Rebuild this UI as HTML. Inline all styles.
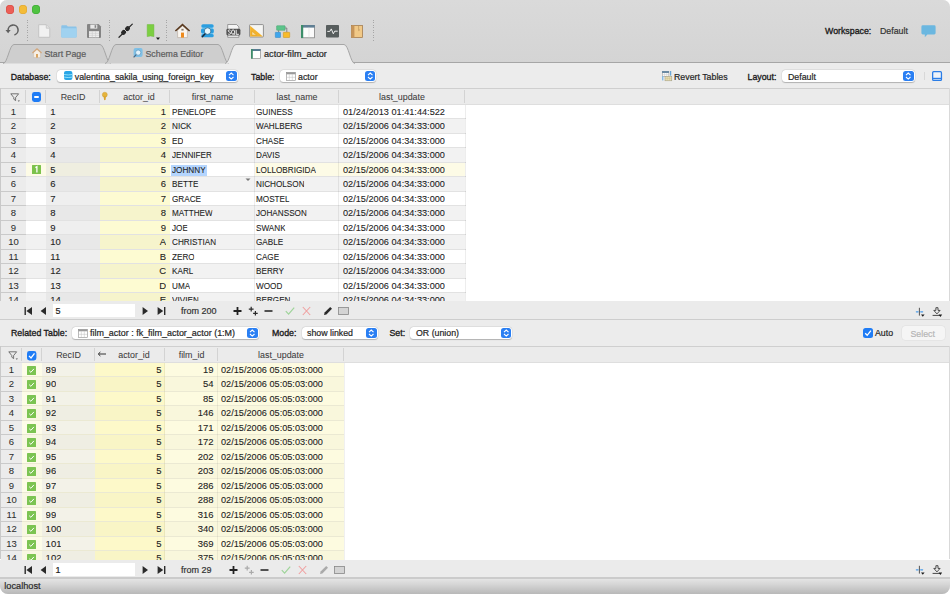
<!DOCTYPE html><html><head><meta charset="utf-8"><style>
*{box-sizing:border-box;margin:0;padding:0}
html,body{width:950px;height:594px;overflow:hidden;background:#fff;font-family:"Liberation Sans", sans-serif;color:#262626}
.t{-webkit-text-stroke:0.2px currentColor}
.t.b{-webkit-text-stroke:0.32px currentColor;color:#1a1a1a}
.cell{-webkit-text-stroke:0.1px currentColor}
.hdr{-webkit-text-stroke:0.05px currentColor}
.cell.rn{-webkit-text-stroke:0.05px currentColor;color:#2e2e2e}
#win{position:absolute;left:0;top:0;width:950px;height:594px;border-radius:7px 7px 8px 8px;overflow:hidden;background:#ececec}
.a{position:absolute}
.t{position:absolute;white-space:nowrap;line-height:12px;height:12px}
svg{position:absolute;overflow:visible}
.light{position:absolute;width:8.5px;height:8.5px;border-radius:50%}
.sep{position:absolute;top:20px;height:21px;width:1px;background:repeating-linear-gradient(#a6a6a6 0 1px,transparent 1px 2.5px)}
.pop{position:absolute;height:12px;background:#fff;border-radius:3.5px;box-shadow:0 0 0 0.4px rgba(0,0,0,.07),0 0.6px 1px rgba(0,0,0,.22)}
.stp{position:absolute;top:1px;width:10.5px;height:10px;border-radius:2.5px;background:#2a7ff3}
.lbl{font-size:8.8px;color:#262626}
.cell{position:absolute;font-size:9.5px;line-height:13.7px;height:14.5px;white-space:nowrap;overflow:hidden;color:#1e1e1e}
.hdr{position:absolute;font-size:8.9px;line-height:17px;height:16px;white-space:nowrap;text-align:center;color:#3c3c3c}
</style></head><body><div id="win">
<div class="a" style="left:0;top:0;width:950px;height:63px;background:linear-gradient(#dadada,#d4d4d4)"></div>
<div class="light" style="left:5.5px;top:5.4px;background:#ec5f57;box-shadow:inset 0 0 0 .5px #d5483f"></div>
<div class="light" style="left:18.5px;top:5.4px;background:#f4bc38;box-shadow:inset 0 0 0 .5px #dca332"></div>
<div class="light" style="left:31.7px;top:5.4px;background:#4fc340;box-shadow:inset 0 0 0 .5px #3aa632"></div>
<div class="sep" style="left:27px"></div>
<div class="sep" style="left:109px"></div>
<div class="sep" style="left:166px"></div>
<div class="sep" style="left:373px"></div>
<svg style="left:5px;top:23.4px" width="16" height="15" viewBox="0 0 16 15"><path d="M3.1 7.4 A5 5 0 1 1 9.4 11.9" fill="none" stroke="#606060" stroke-width="1.6"/><path d="M0.5 6.9 H5.7 L3.1 10.3 Z" fill="#606060"/></svg>
<svg style="left:38px;top:24px" width="13" height="14" viewBox="0 0 13 14"><path d="M0.7 0.7 H8.3 L11.8 4.2 V13.3 H0.7 Z" fill="#f1f1f1" stroke="#c4c4c4" stroke-width="1"/><path d="M8.3 0.7 V4.2 H11.8" fill="#e2e2e2" stroke="#c4c4c4" stroke-width="0.8"/></svg>
<svg style="left:61px;top:25px" width="16" height="13" viewBox="0 0 16 13"><path d="M0.3 1.2 Q0.3 0.3 1.2 0.3 H5.6 L6.8 1.6 H14.8 Q15.6 1.6 15.6 2.4 V11.8 Q15.6 12.6 14.8 12.6 H1.1 Q0.3 12.6 0.3 11.8 Z" fill="#8ac3e8"/><path d="M0.3 3.2 H15.6 V11.8 Q15.6 12.6 14.8 12.6 H1.1 Q0.3 12.6 0.3 11.8 Z" fill="#a0d2f0"/></svg>
<svg style="left:87px;top:24px" width="14" height="14" viewBox="0 0 14 14"><path d="M0 1 Q0 0 1 0 H11.5 L14 2.5 V13 Q14 14 13 14 H1 Q0 14 0 13 Z" fill="#848484"/><rect x="3.3" y="0.6" width="7" height="4" fill="#e9e9e9"/><rect x="7.6" y="1.2" width="1.6" height="2.6" fill="#848484"/><rect x="2" y="7.2" width="10" height="6.2" fill="#efefef"/><path d="M2 9.3 H12 M2 11.3 H12 M5.3 7.2 V13.4 M8.6 7.2 V13.4" stroke="#c9c9c9" stroke-width="0.6"/></svg>
<svg style="left:118px;top:23px" width="16" height="16" viewBox="0 0 16 16"><path d="M1 14.2 L14.3 1.1" stroke="#2a2a2a" stroke-width="1.3" stroke-linecap="round"/><ellipse cx="5.6" cy="9.3" rx="2.7" ry="2.3" transform="rotate(-45 5.6 9.3)" fill="#2a2a2a"/><ellipse cx="9.5" cy="5.6" rx="2.7" ry="2.3" transform="rotate(-45 9.5 5.6)" fill="#2a2a2a"/><path d="M5.2 5.2 L10 10" stroke="#d6d6d6" stroke-width="0.9"/></svg>
<svg style="left:146px;top:23.5px" width="15" height="17" viewBox="0 0 15 17"><path d="M1.2 0.6 H7.9 V12.6 L4.55 12 L1.2 12.6 Z" fill="#7ccf42" stroke="#6cb93a" stroke-width="0.5"/><path d="M10 13.6 H14 L12 16 Z" fill="#1c1c1c"/></svg>
<svg style="left:175px;top:23.5px" width="15" height="14" viewBox="0 0 15 14"><path d="M2.6 6.2 V13.6 H12.4 V6.2 L7.5 2 Z" fill="#faf6f0" stroke="#b5a89a" stroke-width="0.6"/><path d="M0.4 7 L7.5 0.6 L14.6 7" fill="none" stroke="#5a3a20" stroke-width="1.6"/><rect x="6" y="8.6" width="3" height="5" fill="#ee8a1c"/><rect x="6.4" y="4.8" width="2.2" height="1.8" fill="#8a7a6a"/></svg>
<svg style="left:201px;top:23.8px" width="14" height="14" viewBox="0 0 14 14"><rect x="0.5" y="1" width="12" height="11.6" rx="1.5" fill="#9fdaf5"/><rect x="0.3" y="0.2" width="12.4" height="3.5" rx="1.7" fill="#2b9ee0"/><rect x="0" y="4.4" width="12.8" height="5.1" rx="1.7" fill="#2b9ee0"/><rect x="0.3" y="10.1" width="12.4" height="3.1" rx="1.5" fill="#2b9ee0"/><circle cx="6.6" cy="7.1" r="3.3" fill="#e6f7fd" stroke="#1d5c84" stroke-width="0.7"/><path d="M3.9 10 L1.3 12.7" stroke="#182838" stroke-width="1.5" stroke-linecap="round"/></svg>
<svg style="left:225.5px;top:23.8px" width="15" height="14" viewBox="0 0 15 14"><path d="M1.7 0.5 H10.5 L12.9 2.9 V13.3 H1.7 Z" fill="#f4f4f4" stroke="#7a7a7a" stroke-width="0.7"/><rect x="0.4" y="4.8" width="14" height="6.6" rx="1.4" fill="#4f4f4f"/><path d="M4.5 6.4 Q4.1 5.9 3.3 5.9 Q2.2 5.9 2.2 6.9 Q2.2 7.7 3.3 8 Q4.6 8.4 4.6 9.3 Q4.6 10.3 3.3 10.3 Q2.4 10.3 1.9 9.7 M7.1 5.9 Q5.5 5.9 5.5 8.1 Q5.5 10.3 7.1 10.3 Q8.7 10.3 8.7 8.1 Q8.7 5.9 7.1 5.9 M7.6 9.2 L8.9 10.8 M10.2 5.8 V10.3 H12.9" fill="none" stroke="#f0f0f0" stroke-width="1"/></svg>
<svg style="left:249px;top:24.3px" width="15" height="14" viewBox="0 0 15 14"><rect x="0.6" y="0.6" width="13.8" height="12.4" rx="0.6" fill="#f5f5f3" stroke="#909090" stroke-width="1"/><path d="M1.1 1.8 L13.9 12.5 H1.1 Z" fill="#f3b22c"/><path d="M3 7.4 L7.4 11 H3 Z" fill="#fbe2a6" stroke="#d79a1e" stroke-width="0.4"/></svg>
<svg style="left:275px;top:24.5px" width="16" height="14" viewBox="0 0 16 14"><rect x="1.6" y="0.7" width="8.5" height="4.6" rx="0.5" fill="#5cc48a" stroke="#47a271" stroke-width="0.5"/><path d="M10.1 3 H11.8 V7.3 M3.6 5.3 V7.3" stroke="#707070" stroke-width="0.8" fill="none"/><rect x="0.3" y="7.3" width="5.2" height="5.2" rx="0.5" fill="#3fa6ec" stroke="#2f86c2" stroke-width="0.5"/><rect x="8.3" y="7.3" width="6.4" height="5.2" rx="0.5" fill="#f8bb2a" stroke="#c98f14" stroke-width="0.5"/></svg>
<svg style="left:301px;top:24.5px" width="14" height="13" viewBox="0 0 14 13"><rect x="0.4" y="0.4" width="13" height="12.4" fill="#fbfbfb" stroke="#858585" stroke-width="0.8"/><rect x="0" y="0" width="13.8" height="2.6" fill="#5f7f94"/><rect x="0" y="0" width="2.2" height="13" fill="#3c8d69"/><path d="M8 2.6 V12.6" stroke="#dcdcdc" stroke-width="0.6"/></svg>
<svg style="left:326px;top:24.8px" width="13" height="13" viewBox="0 0 13 13"><rect x="0" y="0" width="13" height="12.4" rx="0.8" fill="#575d5d"/><path d="M1.3 6.4 H3.8 L5.3 3.9 L7.3 8.8 L8.7 6.2 H11.7" fill="none" stroke="#f0f0f0" stroke-width="1"/></svg>
<svg style="left:351px;top:24.8px" width="12" height="13" viewBox="0 0 12 13"><rect x="0.4" y="0.4" width="11.2" height="12.2" fill="#f1c987" stroke="#9b7347" stroke-width="0.7"/><rect x="0.4" y="0.4" width="3" height="12.2" fill="#c7955a"/><path d="M7.6 0.8 V5.6 L9 4.6" stroke="#b48a52" stroke-width="0.6" fill="none"/></svg>
<div class="t lbl b" style="left:825px;top:25px;font-size:8.8px">Workspace:</div>
<div class="t lbl" style="left:880px;top:25px;font-size:8.8px;color:#333">Default</div>
<svg style="left:921px;top:25px" width="15" height="13" viewBox="0 0 15 13"><path d="M1.8 0.3 H13.2 Q14.6 0.3 14.6 1.7 V8 Q14.6 9.4 13.2 9.4 H6.4 L3.8 12.2 V9.4 H1.8 Q0.4 9.4 0.4 8 V1.7 Q0.4 0.3 1.8 0.3 Z" fill="#6bb7e0"/></svg>
<div class="a" style="left:0;top:62.2px;width:950px;height:1.3px;background:#a6a6a6"></div>
<svg style="left:3px;top:44px" width="108" height="20" viewBox="0 0 108 20"><path d="M0 19.5 C4.6 19.5 6.4 0.5 11 0.5 L97 0.5 C101.6 0.5 103.4 19.5 108 19.5 Z" fill="#cecece"/><path d="M0 19.5 C4.6 19.5 6.4 0.5 11 0.5 L97 0.5 C101.6 0.5 103.4 19.5 108 19.5" fill="none" stroke="#a2a2a2" stroke-width="0.95"/></svg>
<svg style="left:105px;top:44px" width="124" height="20" viewBox="0 0 124 20"><path d="M0 19.5 C4.6 19.5 6.4 0.5 11 0.5 L113 0.5 C117.6 0.5 119.4 19.5 124 19.5 Z" fill="#cecece"/><path d="M0 19.5 C4.6 19.5 6.4 0.5 11 0.5 L113 0.5 C117.6 0.5 119.4 19.5 124 19.5" fill="none" stroke="#a2a2a2" stroke-width="0.95"/></svg>
<svg style="left:225px;top:44px" width="130" height="20" viewBox="0 0 130 20"><path d="M0 19.5 C4.6 19.5 6.4 0.5 11 0.5 L119 0.5 C123.6 0.5 125.4 19.5 130 19.5 Z" fill="#ececec"/><path d="M0 19.5 C4.6 19.5 6.4 0.5 11 0.5 L119 0.5 C123.6 0.5 125.4 19.5 130 19.5" fill="none" stroke="#a2a2a2" stroke-width="0.95"/></svg>
<div class="a" style="left:229px;top:62.2px;width:122px;height:2px;background:#ececec"></div>
<svg style="left:32px;top:48px" width="10" height="10" viewBox="0 0 10 10"><path d="M1.6 4.4 V9.6 H8.4 V4.4 L5 1.4 Z" fill="#f7f0e6" stroke="#c9b9a8" stroke-width="0.5"/><path d="M0.4 5 L5 0.8 L9.6 5" fill="none" stroke="#d4a77a" stroke-width="1.1"/><rect x="4" y="6" width="2" height="3.6" fill="#d9a461"/></svg>
<div class="t" style="left:44.5px;top:47.8px;font-size:8.8px;color:#5c5c5c">Start Page</div>
<svg style="left:133px;top:48px" width="10" height="10" viewBox="0 0 10 10"><rect x="0.6" y="0" width="9" height="9" rx="2" fill="#7fc0e6"/><circle cx="5.2" cy="4.6" r="2.6" fill="#e4f2fa" stroke="#4f8fb8" stroke-width="0.6"/><path d="M3.2 6.6 L0.6 9.4" stroke="#4a6580" stroke-width="1.2"/></svg>
<div class="t" style="left:145.5px;top:47.8px;font-size:8.8px;color:#5c5c5c">Schema Editor</div>
<svg style="left:251px;top:48.5px" width="10" height="10" viewBox="0 0 10 10"><rect x="0.3" y="0.3" width="9" height="9" fill="#fff" stroke="#7d7d7d" stroke-width="0.6"/><rect x="0" y="0" width="9.6" height="2" fill="#577b91"/><rect x="0" y="0" width="1.8" height="9.6" fill="#3e8b6a"/></svg>
<div class="t" style="left:264px;top:47.6px;font-size:9.15px;color:#262626">actor-film_actor</div>
<div class="a" style="left:0;top:63.5px;width:950px;height:24.5px;background:#ececec"></div>
<div class="t lbl b" style="left:10.7px;top:71px">Database:</div>
<div class="pop" style="left:56.5px;top:69.5px;width:181px"><div class="stp" style="left:169.5px"><svg style="left:0;top:0" width="10.5" height="10" viewBox="0 0 10.5 10"><path d="M3 4.2 L5.25 2.1 L7.5 4.2 M3 6 L5.25 8.1 L7.5 6" fill="none" stroke="#fff" stroke-width="1.1"/></svg></div></div>
<svg style="left:63.7px;top:71.4px" width="9" height="9.5" viewBox="0 0 9 9.5"><rect x="0" y="0" width="8.4" height="9" rx="2" fill="#29a5e6"/><path d="M0 3.5 Q4.2 4.4 8.4 3.5 M0 6.1 Q4.2 7 8.4 6.1" stroke="#8fe0fb" stroke-width="1" fill="none"/></svg>
<div class="t lbl" style="left:74.8px;top:71px">valentina_sakila_using_foreign_key</div>
<div class="t lbl b" style="left:251px;top:71px">Table:</div>
<div class="pop" style="left:280px;top:69.5px;width:96px"><div class="stp" style="left:84.5px"><svg style="left:0;top:0" width="10.5" height="10" viewBox="0 0 10.5 10"><path d="M3 4.2 L5.25 2.1 L7.5 4.2 M3 6 L5.25 8.1 L7.5 6" fill="none" stroke="#fff" stroke-width="1.1"/></svg></div></div>
<svg style="left:286px;top:71.5px" width="10" height="9" viewBox="0 0 10 9"><rect x="0.3" y="0.3" width="9" height="8.2" fill="#fff" stroke="#8a8a8a" stroke-width="0.6"/><rect x="0.3" y="0.3" width="9" height="2" fill="#9a9a9a"/><path d="M3.3 2.3 V8.5 M6.3 2.3 V8.5 M0.3 5.3 H9.3" stroke="#bdbdbd" stroke-width="0.5"/></svg>
<div class="t lbl" style="left:298px;top:71px">actor</div>
<svg style="left:662.2px;top:71.4px" width="10" height="10" viewBox="0 0 10 10"><rect x="0.3" y="0.3" width="6.6" height="5.4" fill="#fafafa" stroke="#8c8c8c" stroke-width="0.5"/><rect x="0" y="0" width="7" height="2" fill="#6c8aa2"/><path d="M0.3 3.6 H6.9 M2.5 2 V5.7 M4.7 2 V5.7" stroke="#c4c4c4" stroke-width="0.4"/><rect x="8.1" y="0" width="1.1" height="4.6" fill="#5c9fd6"/><rect x="0.2" y="5.2" width="1.1" height="4.2" fill="#6db0e4"/><rect x="3" y="5.4" width="6.8" height="4.4" fill="#e9deb0" stroke="#9c9880" stroke-width="0.5"/><path d="M3 7.5 H9.8 M5.3 5.4 V9.8 M7.5 5.4 V9.8" stroke="#c9bd8e" stroke-width="0.4"/></svg>
<div class="t lbl" style="left:674px;top:71px">Revert Tables</div>
<div class="t lbl b" style="left:747.5px;top:71px">Layout:</div>
<div class="pop" style="left:782px;top:69.5px;width:133px"><div class="stp" style="left:121px"><svg style="left:0;top:0" width="10.5" height="10" viewBox="0 0 10.5 10"><path d="M3 4.2 L5.25 2.1 L7.5 4.2 M3 6 L5.25 8.1 L7.5 6" fill="none" stroke="#fff" stroke-width="1.1"/></svg></div></div>
<div class="t lbl" style="left:788px;top:71px">Default</div>
<div class="a" style="left:924px;top:72px;width:1px;height:8px;background:#d8d8d8"></div>
<svg style="left:931.8px;top:71px" width="11" height="11" viewBox="0 0 11 11"><rect x="0.65" y="0.65" width="8.8" height="8.8" rx="1" fill="#eef3f9" stroke="#2b7de6" stroke-width="1.3"/><rect x="0.65" y="6.8" width="8.8" height="1.3" fill="#2b7de6"/></svg>
<div class="a" style="left:0;top:88px;width:950px;height:213.5px;background:#fff"></div>
<div class="a" style="left:0;top:88px;width:950px;height:1px;background:#cfcfcf"></div>
<div class="a" style="left:0;top:89px;width:950px;height:15.6px;background:#ebebeb;border-bottom:1px solid #dedede"></div>
<div class="a" style="left:25px;top:90px;width:1px;height:13px;background:#d3d3d3"></div>
<div class="a" style="left:45px;top:90px;width:1px;height:13px;background:#d3d3d3"></div>
<div class="a" style="left:99px;top:90px;width:1px;height:13px;background:#d3d3d3"></div>
<div class="a" style="left:169px;top:90px;width:1px;height:13px;background:#d3d3d3"></div>
<div class="a" style="left:254px;top:90px;width:1px;height:13px;background:#d3d3d3"></div>
<div class="a" style="left:338px;top:90px;width:1px;height:13px;background:#d3d3d3"></div>
<div class="a" style="left:464px;top:90px;width:1px;height:13px;background:#d3d3d3"></div>
<div class="a" style="left:0;top:88px;width:1px;height:213px;background:#c9c9c9"></div>
<div class="a" style="left:948.5px;top:88px;width:1.5px;height:213px;background:#d9d9d9"></div>
<div class="hdr" style="left:46px;top:89px;width:54px">RecID</div>
<div class="hdr" style="left:108px;top:89px;width:62px">actor_id</div>
<div class="hdr" style="left:170px;top:89px;width:85px">first_name</div>
<div class="hdr" style="left:255px;top:89px;width:84px">last_name</div>
<div class="hdr" style="left:339px;top:89px;width:126px">last_update</div>
<svg style="left:9.5px;top:93px" width="11" height="10" viewBox="0 0 11 10"><path d="M0.8 0.8 H8.6 L5.6 4.6 V7.6 L3.8 6.2 V4.6 Z" fill="none" stroke="#555" stroke-width="0.8" stroke-linejoin="round"/><path d="M7.6 7.4 H10 L8.8 8.8 Z" fill="#555"/></svg>
<div class="a" style="left:32px;top:92.4px;width:9.2px;height:9.2px;border-radius:2.4px;background:#1f7cf5"><div class="a" style="left:1.9px;top:3.8px;width:5.4px;height:1.6px;background:#fff;border-radius:1px"></div></div>
<svg style="left:101.8px;top:91.8px" width="6" height="9" viewBox="0 0 6 9"><circle cx="2.8" cy="2.7" r="2.5" fill="#e5b43c" stroke="#c9962a" stroke-width="0.4"/><path d="M1.7 4.6 H3.9 L3.6 7.8 Q2.8 8.6 2 7.8 Z" fill="#d9a431"/></svg>
<div class="a" style="left:0;top:104.6px;width:950px;height:196.70000000000002px;overflow:hidden">
<div class="a" style="left:1px;top:0.0px;width:24.5px;height:14.5px;background:#ececec;border-bottom:1px solid #cacaca"></div>
<div class="a" style="left:25.5px;top:0.0px;width:20.5px;height:14.5px;background:#ffffff"></div>
<div class="a" style="left:46px;top:0.0px;width:54px;height:14.5px;background:#efefef"></div>
<div class="a" style="left:100px;top:0.0px;width:70px;height:14.5px;background:#fdfbd2"></div>
<div class="a" style="left:170px;top:0.0px;width:295px;height:14.5px;background:#ffffff"></div>
<div class="a" style="left:25.5px;top:13.9px;width:440px;height:0.6px;background:#e2e2e2"></div>
<div class="cell rn" style="left:1px;top:0.0px;width:25px;text-align:center">1</div>
<div class="cell" style="left:50.3px;top:0.0px">1</div>
<div class="cell" style="left:100px;top:0.0px;width:66px;text-align:right">1</div>
<div class="cell" style="left:171.9px;top:0.0px;transform:scaleX(.86);transform-origin:0 0">PENELOPE</div>
<div class="cell" style="left:256.4px;top:0.0px;transform:scaleX(.86);transform-origin:0 0">GUINESS</div>
<div class="cell" style="left:342.5px;top:0.0px;transform:scaleX(.965);transform-origin:0 0">01/24/2013 01:41:44:522</div>
<div class="a" style="left:1px;top:14.5px;width:24.5px;height:14.5px;background:#ececec;border-bottom:1px solid #cacaca"></div>
<div class="a" style="left:25.5px;top:14.5px;width:20.5px;height:14.5px;background:#f1f1f1"></div>
<div class="a" style="left:46px;top:14.5px;width:54px;height:14.5px;background:#e8e8e8"></div>
<div class="a" style="left:100px;top:14.5px;width:70px;height:14.5px;background:#f6f4cc"></div>
<div class="a" style="left:170px;top:14.5px;width:295px;height:14.5px;background:#f2f2f2"></div>
<div class="a" style="left:25.5px;top:28.4px;width:440px;height:0.6px;background:#e2e2e2"></div>
<div class="cell rn" style="left:1px;top:14.5px;width:25px;text-align:center">2</div>
<div class="cell" style="left:50.3px;top:14.5px">2</div>
<div class="cell" style="left:100px;top:14.5px;width:66px;text-align:right">2</div>
<div class="cell" style="left:171.9px;top:14.5px;transform:scaleX(.86);transform-origin:0 0">NICK</div>
<div class="cell" style="left:256.4px;top:14.5px;transform:scaleX(.86);transform-origin:0 0">WAHLBERG</div>
<div class="cell" style="left:342.5px;top:14.5px;transform:scaleX(.965);transform-origin:0 0">02/15/2006 04:34:33:000</div>
<div class="a" style="left:1px;top:29.0px;width:24.5px;height:14.5px;background:#ececec;border-bottom:1px solid #cacaca"></div>
<div class="a" style="left:25.5px;top:29.0px;width:20.5px;height:14.5px;background:#ffffff"></div>
<div class="a" style="left:46px;top:29.0px;width:54px;height:14.5px;background:#efefef"></div>
<div class="a" style="left:100px;top:29.0px;width:70px;height:14.5px;background:#fdfbd2"></div>
<div class="a" style="left:170px;top:29.0px;width:295px;height:14.5px;background:#ffffff"></div>
<div class="a" style="left:25.5px;top:42.9px;width:440px;height:0.6px;background:#e2e2e2"></div>
<div class="cell rn" style="left:1px;top:29.0px;width:25px;text-align:center">3</div>
<div class="cell" style="left:50.3px;top:29.0px">3</div>
<div class="cell" style="left:100px;top:29.0px;width:66px;text-align:right">3</div>
<div class="cell" style="left:171.9px;top:29.0px;transform:scaleX(.86);transform-origin:0 0">ED</div>
<div class="cell" style="left:256.4px;top:29.0px;transform:scaleX(.86);transform-origin:0 0">CHASE</div>
<div class="cell" style="left:342.5px;top:29.0px;transform:scaleX(.965);transform-origin:0 0">02/15/2006 04:34:33:000</div>
<div class="a" style="left:1px;top:43.5px;width:24.5px;height:14.5px;background:#ececec;border-bottom:1px solid #cacaca"></div>
<div class="a" style="left:25.5px;top:43.5px;width:20.5px;height:14.5px;background:#f1f1f1"></div>
<div class="a" style="left:46px;top:43.5px;width:54px;height:14.5px;background:#e8e8e8"></div>
<div class="a" style="left:100px;top:43.5px;width:70px;height:14.5px;background:#f6f4cc"></div>
<div class="a" style="left:170px;top:43.5px;width:295px;height:14.5px;background:#f2f2f2"></div>
<div class="a" style="left:25.5px;top:57.4px;width:440px;height:0.6px;background:#e2e2e2"></div>
<div class="cell rn" style="left:1px;top:43.5px;width:25px;text-align:center">4</div>
<div class="cell" style="left:50.3px;top:43.5px">4</div>
<div class="cell" style="left:100px;top:43.5px;width:66px;text-align:right">4</div>
<div class="cell" style="left:171.9px;top:43.5px;transform:scaleX(.86);transform-origin:0 0">JENNIFER</div>
<div class="cell" style="left:256.4px;top:43.5px;transform:scaleX(.86);transform-origin:0 0">DAVIS</div>
<div class="cell" style="left:342.5px;top:43.5px;transform:scaleX(.965);transform-origin:0 0">02/15/2006 04:34:33:000</div>
<div class="a" style="left:1px;top:58.0px;width:24.5px;height:14.5px;background:#ececec;border-bottom:1px solid #cacaca"></div>
<div class="a" style="left:25.5px;top:58.0px;width:20.5px;height:14.5px;background:#fdfbe6"></div>
<div class="a" style="left:46px;top:58.0px;width:54px;height:14.5px;background:#efeee0"></div>
<div class="a" style="left:100px;top:58.0px;width:70px;height:14.5px;background:#fcfad8"></div>
<div class="a" style="left:170px;top:58.0px;width:295px;height:14.5px;background:#fdfbe6"></div>
<div class="a" style="left:170px;top:58.0px;width:85px;height:14.5px;background:#fff"></div>
<div class="a" style="left:25.5px;top:71.9px;width:440px;height:0.6px;background:#e2e2e2"></div>
<div class="cell rn" style="left:1px;top:58.0px;width:25px;text-align:center">5</div>
<div class="cell" style="left:50.3px;top:58.0px">5</div>
<div class="cell" style="left:100px;top:58.0px;width:66px;text-align:right">5</div>
<div class="a" style="left:171px;top:60.0px;width:36px;height:11px;background:#b4d5fe"></div>
<div class="cell" style="left:171.9px;top:58.0px;transform:scaleX(.86);transform-origin:0 0">JOHNNY</div>
<div class="cell" style="left:256.4px;top:58.0px;transform:scaleX(.86);transform-origin:0 0">LOLLOBRIGIDA</div>
<div class="cell" style="left:342.5px;top:58.0px;transform:scaleX(.965);transform-origin:0 0">02/15/2006 04:34:33:000</div>
<div class="a" style="left:1px;top:72.5px;width:24.5px;height:14.5px;background:#ececec;border-bottom:1px solid #cacaca"></div>
<div class="a" style="left:25.5px;top:72.5px;width:20.5px;height:14.5px;background:#f1f1f1"></div>
<div class="a" style="left:46px;top:72.5px;width:54px;height:14.5px;background:#e8e8e8"></div>
<div class="a" style="left:100px;top:72.5px;width:70px;height:14.5px;background:#f6f4cc"></div>
<div class="a" style="left:170px;top:72.5px;width:295px;height:14.5px;background:#f2f2f2"></div>
<div class="a" style="left:25.5px;top:86.4px;width:440px;height:0.6px;background:#e2e2e2"></div>
<div class="cell rn" style="left:1px;top:72.5px;width:25px;text-align:center">6</div>
<div class="cell" style="left:50.3px;top:72.5px">6</div>
<div class="cell" style="left:100px;top:72.5px;width:66px;text-align:right">6</div>
<div class="cell" style="left:171.9px;top:72.5px;transform:scaleX(.86);transform-origin:0 0">BETTE</div>
<div class="cell" style="left:256.4px;top:72.5px;transform:scaleX(.86);transform-origin:0 0">NICHOLSON</div>
<div class="cell" style="left:342.5px;top:72.5px;transform:scaleX(.965);transform-origin:0 0">02/15/2006 04:34:33:000</div>
<div class="a" style="left:1px;top:87.0px;width:24.5px;height:14.5px;background:#ececec;border-bottom:1px solid #cacaca"></div>
<div class="a" style="left:25.5px;top:87.0px;width:20.5px;height:14.5px;background:#ffffff"></div>
<div class="a" style="left:46px;top:87.0px;width:54px;height:14.5px;background:#efefef"></div>
<div class="a" style="left:100px;top:87.0px;width:70px;height:14.5px;background:#fdfbd2"></div>
<div class="a" style="left:170px;top:87.0px;width:295px;height:14.5px;background:#ffffff"></div>
<div class="a" style="left:25.5px;top:100.9px;width:440px;height:0.6px;background:#e2e2e2"></div>
<div class="cell rn" style="left:1px;top:87.0px;width:25px;text-align:center">7</div>
<div class="cell" style="left:50.3px;top:87.0px">7</div>
<div class="cell" style="left:100px;top:87.0px;width:66px;text-align:right">7</div>
<div class="cell" style="left:171.9px;top:87.0px;transform:scaleX(.86);transform-origin:0 0">GRACE</div>
<div class="cell" style="left:256.4px;top:87.0px;transform:scaleX(.86);transform-origin:0 0">MOSTEL</div>
<div class="cell" style="left:342.5px;top:87.0px;transform:scaleX(.965);transform-origin:0 0">02/15/2006 04:34:33:000</div>
<div class="a" style="left:1px;top:101.5px;width:24.5px;height:14.5px;background:#ececec;border-bottom:1px solid #cacaca"></div>
<div class="a" style="left:25.5px;top:101.5px;width:20.5px;height:14.5px;background:#f1f1f1"></div>
<div class="a" style="left:46px;top:101.5px;width:54px;height:14.5px;background:#e8e8e8"></div>
<div class="a" style="left:100px;top:101.5px;width:70px;height:14.5px;background:#f6f4cc"></div>
<div class="a" style="left:170px;top:101.5px;width:295px;height:14.5px;background:#f2f2f2"></div>
<div class="a" style="left:25.5px;top:115.4px;width:440px;height:0.6px;background:#e2e2e2"></div>
<div class="cell rn" style="left:1px;top:101.5px;width:25px;text-align:center">8</div>
<div class="cell" style="left:50.3px;top:101.5px">8</div>
<div class="cell" style="left:100px;top:101.5px;width:66px;text-align:right">8</div>
<div class="cell" style="left:171.9px;top:101.5px;transform:scaleX(.86);transform-origin:0 0">MATTHEW</div>
<div class="cell" style="left:256.4px;top:101.5px;transform:scaleX(.86);transform-origin:0 0">JOHANSSON</div>
<div class="cell" style="left:342.5px;top:101.5px;transform:scaleX(.965);transform-origin:0 0">02/15/2006 04:34:33:000</div>
<div class="a" style="left:1px;top:116.0px;width:24.5px;height:14.5px;background:#ececec;border-bottom:1px solid #cacaca"></div>
<div class="a" style="left:25.5px;top:116.0px;width:20.5px;height:14.5px;background:#ffffff"></div>
<div class="a" style="left:46px;top:116.0px;width:54px;height:14.5px;background:#efefef"></div>
<div class="a" style="left:100px;top:116.0px;width:70px;height:14.5px;background:#fdfbd2"></div>
<div class="a" style="left:170px;top:116.0px;width:295px;height:14.5px;background:#ffffff"></div>
<div class="a" style="left:25.5px;top:129.9px;width:440px;height:0.6px;background:#e2e2e2"></div>
<div class="cell rn" style="left:1px;top:116.0px;width:25px;text-align:center">9</div>
<div class="cell" style="left:50.3px;top:116.0px">9</div>
<div class="cell" style="left:100px;top:116.0px;width:66px;text-align:right">9</div>
<div class="cell" style="left:171.9px;top:116.0px;transform:scaleX(.86);transform-origin:0 0">JOE</div>
<div class="cell" style="left:256.4px;top:116.0px;transform:scaleX(.86);transform-origin:0 0">SWANK</div>
<div class="cell" style="left:342.5px;top:116.0px;transform:scaleX(.965);transform-origin:0 0">02/15/2006 04:34:33:000</div>
<div class="a" style="left:1px;top:130.5px;width:24.5px;height:14.5px;background:#ececec;border-bottom:1px solid #cacaca"></div>
<div class="a" style="left:25.5px;top:130.5px;width:20.5px;height:14.5px;background:#f1f1f1"></div>
<div class="a" style="left:46px;top:130.5px;width:54px;height:14.5px;background:#e8e8e8"></div>
<div class="a" style="left:100px;top:130.5px;width:70px;height:14.5px;background:#f6f4cc"></div>
<div class="a" style="left:170px;top:130.5px;width:295px;height:14.5px;background:#f2f2f2"></div>
<div class="a" style="left:25.5px;top:144.4px;width:440px;height:0.6px;background:#e2e2e2"></div>
<div class="cell rn" style="left:1px;top:130.5px;width:25px;text-align:center">10</div>
<div class="cell" style="left:50.3px;top:130.5px">10</div>
<div class="cell" style="left:100px;top:130.5px;width:66px;text-align:right">A</div>
<div class="cell" style="left:171.9px;top:130.5px;transform:scaleX(.86);transform-origin:0 0">CHRISTIAN</div>
<div class="cell" style="left:256.4px;top:130.5px;transform:scaleX(.86);transform-origin:0 0">GABLE</div>
<div class="cell" style="left:342.5px;top:130.5px;transform:scaleX(.965);transform-origin:0 0">02/15/2006 04:34:33:000</div>
<div class="a" style="left:1px;top:145.0px;width:24.5px;height:14.5px;background:#ececec;border-bottom:1px solid #cacaca"></div>
<div class="a" style="left:25.5px;top:145.0px;width:20.5px;height:14.5px;background:#ffffff"></div>
<div class="a" style="left:46px;top:145.0px;width:54px;height:14.5px;background:#efefef"></div>
<div class="a" style="left:100px;top:145.0px;width:70px;height:14.5px;background:#fdfbd2"></div>
<div class="a" style="left:170px;top:145.0px;width:295px;height:14.5px;background:#ffffff"></div>
<div class="a" style="left:25.5px;top:158.9px;width:440px;height:0.6px;background:#e2e2e2"></div>
<div class="cell rn" style="left:1px;top:145.0px;width:25px;text-align:center">11</div>
<div class="cell" style="left:50.3px;top:145.0px">11</div>
<div class="cell" style="left:100px;top:145.0px;width:66px;text-align:right">B</div>
<div class="cell" style="left:171.9px;top:145.0px;transform:scaleX(.86);transform-origin:0 0">ZERO</div>
<div class="cell" style="left:256.4px;top:145.0px;transform:scaleX(.86);transform-origin:0 0">CAGE</div>
<div class="cell" style="left:342.5px;top:145.0px;transform:scaleX(.965);transform-origin:0 0">02/15/2006 04:34:33:000</div>
<div class="a" style="left:1px;top:159.5px;width:24.5px;height:14.5px;background:#ececec;border-bottom:1px solid #cacaca"></div>
<div class="a" style="left:25.5px;top:159.5px;width:20.5px;height:14.5px;background:#f1f1f1"></div>
<div class="a" style="left:46px;top:159.5px;width:54px;height:14.5px;background:#e8e8e8"></div>
<div class="a" style="left:100px;top:159.5px;width:70px;height:14.5px;background:#f6f4cc"></div>
<div class="a" style="left:170px;top:159.5px;width:295px;height:14.5px;background:#f2f2f2"></div>
<div class="a" style="left:25.5px;top:173.4px;width:440px;height:0.6px;background:#e2e2e2"></div>
<div class="cell rn" style="left:1px;top:159.5px;width:25px;text-align:center">12</div>
<div class="cell" style="left:50.3px;top:159.5px">12</div>
<div class="cell" style="left:100px;top:159.5px;width:66px;text-align:right">C</div>
<div class="cell" style="left:171.9px;top:159.5px;transform:scaleX(.86);transform-origin:0 0">KARL</div>
<div class="cell" style="left:256.4px;top:159.5px;transform:scaleX(.86);transform-origin:0 0">BERRY</div>
<div class="cell" style="left:342.5px;top:159.5px;transform:scaleX(.965);transform-origin:0 0">02/15/2006 04:34:33:000</div>
<div class="a" style="left:1px;top:174.0px;width:24.5px;height:14.5px;background:#ececec;border-bottom:1px solid #cacaca"></div>
<div class="a" style="left:25.5px;top:174.0px;width:20.5px;height:14.5px;background:#ffffff"></div>
<div class="a" style="left:46px;top:174.0px;width:54px;height:14.5px;background:#efefef"></div>
<div class="a" style="left:100px;top:174.0px;width:70px;height:14.5px;background:#fdfbd2"></div>
<div class="a" style="left:170px;top:174.0px;width:295px;height:14.5px;background:#ffffff"></div>
<div class="a" style="left:25.5px;top:187.9px;width:440px;height:0.6px;background:#e2e2e2"></div>
<div class="cell rn" style="left:1px;top:174.0px;width:25px;text-align:center">13</div>
<div class="cell" style="left:50.3px;top:174.0px">13</div>
<div class="cell" style="left:100px;top:174.0px;width:66px;text-align:right">D</div>
<div class="cell" style="left:171.9px;top:174.0px;transform:scaleX(.86);transform-origin:0 0">UMA</div>
<div class="cell" style="left:256.4px;top:174.0px;transform:scaleX(.86);transform-origin:0 0">WOOD</div>
<div class="cell" style="left:342.5px;top:174.0px;transform:scaleX(.965);transform-origin:0 0">02/15/2006 04:34:33:000</div>
<div class="a" style="left:1px;top:188.5px;width:24.5px;height:14.5px;background:#ececec;border-bottom:1px solid #cacaca"></div>
<div class="a" style="left:25.5px;top:188.5px;width:20.5px;height:14.5px;background:#f1f1f1"></div>
<div class="a" style="left:46px;top:188.5px;width:54px;height:14.5px;background:#e8e8e8"></div>
<div class="a" style="left:100px;top:188.5px;width:70px;height:14.5px;background:#f6f4cc"></div>
<div class="a" style="left:170px;top:188.5px;width:295px;height:14.5px;background:#f2f2f2"></div>
<div class="a" style="left:25.5px;top:202.4px;width:440px;height:0.6px;background:#e2e2e2"></div>
<div class="cell rn" style="left:1px;top:188.5px;width:25px;text-align:center">14</div>
<div class="cell" style="left:50.3px;top:188.5px">14</div>
<div class="cell" style="left:100px;top:188.5px;width:66px;text-align:right">E</div>
<div class="cell" style="left:171.9px;top:188.5px;transform:scaleX(.86);transform-origin:0 0">VIVIEN</div>
<div class="cell" style="left:256.4px;top:188.5px;transform:scaleX(.86);transform-origin:0 0">BERGEN</div>
<div class="cell" style="left:342.5px;top:188.5px;transform:scaleX(.965);transform-origin:0 0">02/15/2006 04:34:33:000</div>
<div class="a" style="left:254px;top:0;width:1px;height:200px;background:rgba(0,0,0,.07)"></div>
<div class="a" style="left:338px;top:0;width:1px;height:200px;background:rgba(0,0,0,.07)"></div>
<div class="a" style="left:464.5px;top:0;width:1px;height:200px;background:rgba(0,0,0,.07)"></div>
<svg style="left:32px;top:60.4px" width="9" height="9" viewBox="0 0 9 9"><rect x="0" y="0" width="9" height="9" rx="0.5" fill="#7cc24c"/><path d="M3.4 2.6 L4.9 1.7 V7.4" fill="none" stroke="#fff" stroke-width="1.3"/></svg>
<svg style="left:245px;top:73.5px" width="6" height="4" viewBox="0 0 6 4"><path d="M0.5 0.5 H5.5 L3 3 Z" fill="#777"/></svg>
</div>
<div class="a" style="left:0;top:301.3px;width:950px;height:17.5px;background:#ebebeb"></div>
<svg style="left:24px;top:306.3px" width="9" height="10" viewBox="0 0 9 10"><rect x="0.5" y="1" width="1.4" height="8" fill="#2a2a2a"/><path d="M8 1 V9 L2.4 5 Z" fill="#2a2a2a"/></svg>
<svg style="left:40px;top:306.3px" width="7" height="10" viewBox="0 0 7 10"><path d="M6 1 V9 L0.6 5 Z" fill="#2a2a2a"/></svg>
<div class="a" style="left:53px;top:303.8px;width:82px;height:13px;background:#fff"></div>
<div class="t" style="left:55.5px;top:305.3px;font-size:9px;color:#1e1e1e">5</div>
<svg style="left:142px;top:306.3px" width="7" height="10" viewBox="0 0 7 10"><path d="M0.6 1 V9 L6 5 Z" fill="#2a2a2a"/></svg>
<svg style="left:156.5px;top:306.3px" width="9" height="10" viewBox="0 0 9 10"><path d="M0.6 1 V9 L6.2 5 Z" fill="#2a2a2a"/><rect x="7" y="1" width="1.4" height="8" fill="#2a2a2a"/></svg>
<div class="t" style="left:181px;top:305.3px;font-size:9px;color:#333">from 200</div>
<svg style="left:233px;top:306.3px" width="9" height="10" viewBox="0 0 9 10"><path d="M4.5 1 V9 M0.5 5 H8.5" stroke="#222" stroke-width="1.8"/></svg>
<svg style="left:248px;top:306.3px" width="10" height="10" viewBox="0 0 10 10"><path d="M3.2 0.8 V5.6 M0.8 3.2 H5.6" stroke="#2a2a2a" stroke-width="1.2"/><path d="M7.4 5 V9.6 M5.1 7.3 H9.7" stroke="#2a2a2a" stroke-width="1.2"/></svg>
<svg style="left:264px;top:306.3px" width="9" height="10" viewBox="0 0 9 10"><path d="M0.5 5 H8.5" stroke="#2a2a2a" stroke-width="1.6"/></svg>
<svg style="left:285px;top:306.3px" width="10" height="10" viewBox="0 0 10 10"><path d="M0.8 5.2 L3.6 8.2 L9.2 1.6" fill="none" stroke="#9fd49a" stroke-width="1.2"/></svg>
<svg style="left:302px;top:306.3px" width="9" height="10" viewBox="0 0 9 10"><path d="M0.8 1 L8.2 9 M8.2 1 L0.8 9" stroke="#f0a0a0" stroke-width="1.1"/></svg>
<svg style="left:323px;top:306.3px" width="10" height="10" viewBox="0 0 10 10"><path d="M1 9 L1.6 6.6 L7.2 1 L9 2.8 L3.4 8.4 Z" fill="#2a2a2a"/></svg>
<svg style="left:338px;top:306.3px" width="11" height="10" viewBox="0 0 11 10"><rect x="0.5" y="1.5" width="10" height="7" fill="#d4d4d4" stroke="#888" stroke-width="0.8"/></svg>
<svg style="left:915px;top:306.8px" width="11" height="11" viewBox="0 0 11 11"><path d="M4.4 0.8 V8.6" stroke="#444" stroke-width="0.9"/><path d="M1.4 4.8 H3.1 M5.7 4.8 H7.6" stroke="#4a9be8" stroke-width="1.3" stroke-linecap="round"/><path d="M6 7.4 H9.6 L7.8 9.8 Z" fill="#1a1a1a"/></svg>
<svg style="left:932px;top:306.8px" width="11" height="11" viewBox="0 0 11 11"><path d="M3.9 0.7 H6 V3.4 H8.1 L4.95 6.9 L1.8 3.4 H3.9 Z" fill="none" stroke="#333" stroke-width="0.85" stroke-linejoin="miter"/><path d="M0.6 8.4 H8" stroke="#333" stroke-width="0.9"/><path d="M6.6 7.6 H10.2 L8.4 10 Z" fill="#1a1a1a"/></svg>
<div class="a" style="left:0;top:318.5px;width:950px;height:1px;background:#cdcdcd"></div>
<div class="a" style="left:0;top:319.5px;width:950px;height:28px;background:#ececec"></div>
<div class="t lbl b" style="left:11px;top:327px">Related Table:</div>
<div class="pop" style="left:71.5px;top:326.5px;width:187px"><div class="stp" style="left:175.5px"><svg style="left:0;top:0" width="10.5" height="10" viewBox="0 0 10.5 10"><path d="M3 4.2 L5.25 2.1 L7.5 4.2 M3 6 L5.25 8.1 L7.5 6" fill="none" stroke="#fff" stroke-width="1.1"/></svg></div></div>
<svg style="left:78px;top:328.5px" width="10" height="9" viewBox="0 0 10 9"><rect x="0.3" y="0.3" width="9" height="8.2" fill="#fff" stroke="#8a8a8a" stroke-width="0.6"/><rect x="0.3" y="0.3" width="9" height="2" fill="#9a9a9a"/><path d="M3.3 2.3 V8.5 M6.3 2.3 V8.5 M0.3 5.3 H9.3" stroke="#bdbdbd" stroke-width="0.5"/></svg>
<div class="t lbl" style="left:90px;top:327px;font-size:8.95px">film_actor : fk_film_actor_actor (1:M)</div>
<div class="t lbl b" style="left:272px;top:327px">Mode:</div>
<div class="pop" style="left:302px;top:326.5px;width:76px"><div class="stp" style="left:64px"><svg style="left:0;top:0" width="10.5" height="10" viewBox="0 0 10.5 10"><path d="M3 4.2 L5.25 2.1 L7.5 4.2 M3 6 L5.25 8.1 L7.5 6" fill="none" stroke="#fff" stroke-width="1.1"/></svg></div></div>
<div class="t lbl" style="left:307px;top:327px">show linked</div>
<div class="t lbl b" style="left:389.5px;top:327px">Set:</div>
<div class="pop" style="left:410px;top:326.5px;width:102px"><div class="stp" style="left:90.5px"><svg style="left:0;top:0" width="10.5" height="10" viewBox="0 0 10.5 10"><path d="M3 4.2 L5.25 2.1 L7.5 4.2 M3 6 L5.25 8.1 L7.5 6" fill="none" stroke="#fff" stroke-width="1.1"/></svg></div></div>
<div class="t lbl" style="left:416px;top:327px">OR (union)</div>
<div class="a" style="left:863px;top:327.5px;width:10px;height:10px;border-radius:2.5px;background:#1f7cf5"></div>
<svg style="left:863px;top:327.5px" width="10" height="10" viewBox="0 0 10 10"><path d="M2.2 5.2 L4.2 7.3 L7.9 2.6" fill="none" stroke="#fff" stroke-width="1.3"/></svg>
<div class="t lbl" style="left:875px;top:327px">Auto</div>
<div class="pop" style="left:902px;top:326px;width:43px;height:14px;background:#f5f5f5;box-shadow:0 0 0 0.5px rgba(0,0,0,.06)"></div>
<div class="t lbl" style="left:910.5px;top:327.5px;color:#b5b5b5">Select</div>
<div class="a" style="left:0;top:346.3px;width:950px;height:213.7px;background:#fff"></div>
<div class="a" style="left:0;top:346.3px;width:950px;height:1px;background:#cfcfcf"></div>
<div class="a" style="left:0;top:347.3px;width:950px;height:15.6px;background:#ebebeb;border-bottom:1px solid #dedede"></div>
<div class="a" style="left:21px;top:348.3px;width:1px;height:13px;background:#d3d3d3"></div>
<div class="a" style="left:41px;top:348.3px;width:1px;height:13px;background:#d3d3d3"></div>
<div class="a" style="left:94px;top:348.3px;width:1px;height:13px;background:#d3d3d3"></div>
<div class="a" style="left:164px;top:348.3px;width:1px;height:13px;background:#d3d3d3"></div>
<div class="a" style="left:217px;top:348.3px;width:1px;height:13px;background:#d3d3d3"></div>
<div class="a" style="left:343px;top:348.3px;width:1px;height:13px;background:#d3d3d3"></div>
<div class="a" style="left:0;top:346.3px;width:1px;height:213px;background:#c9c9c9"></div>
<div class="a" style="left:948.5px;top:346.3px;width:1.5px;height:213px;background:#d9d9d9"></div>
<div class="hdr" style="left:42px;top:347.3px;width:53px">RecID</div>
<div class="hdr" style="left:103px;top:347.3px;width:62px">actor_id</div>
<div class="hdr" style="left:165px;top:347.3px;width:53px">film_id</div>
<div class="hdr" style="left:218px;top:347.3px;width:126px">last_update</div>
<svg style="left:7.5px;top:351.3px" width="11" height="10" viewBox="0 0 11 10"><path d="M0.8 0.8 H8.6 L5.6 4.6 V7.6 L3.8 6.2 V4.6 Z" fill="none" stroke="#555" stroke-width="0.8" stroke-linejoin="round"/><path d="M7.6 7.4 H10 L8.8 8.8 Z" fill="#555"/></svg>
<svg style="left:26.6px;top:350.5px" width="10" height="10" viewBox="0 0 10 10"><rect x="0" y="0" width="9.4" height="9.4" rx="2.4" fill="#1f7cf5"/><path d="M2 4.9 L4 6.9 L7.5 2.4" fill="none" stroke="#fff" stroke-width="1.3"/></svg>
<svg style="left:97px;top:351.3px" width="10" height="6" viewBox="0 0 10 6"><path d="M9 3 H2 M3.4 1 L1.2 3 L3.4 5" fill="none" stroke="#333" stroke-width="1"/></svg>
<div class="a" style="left:0;top:362.6px;width:950px;height:197.39999999999998px;overflow:hidden">
<div class="a" style="left:1px;top:0.0px;width:20.5px;height:14.5px;background:#ececec;border-bottom:1px solid #cacaca"></div>
<div class="a" style="left:21.5px;top:0.0px;width:20.5px;height:14.5px;background:#fdfce8"></div>
<div class="a" style="left:42px;top:0.0px;width:53px;height:14.5px;background:#f3f2e8"></div>
<div class="a" style="left:95px;top:0.0px;width:70px;height:14.5px;background:#fdf9c9"></div>
<div class="a" style="left:165px;top:0.0px;width:179px;height:14.5px;background:#fdfbe0"></div>
<div class="a" style="left:21.5px;top:13.9px;width:322.5px;height:0.6px;background:#ebe9d3"></div>
<svg style="left:27px;top:3.0px" width="9" height="9" viewBox="0 0 9 9"><rect x="0" y="0" width="9" height="9" rx="0.6" fill="#7cc452"/><path d="M2.2 4.7 L3.9 6.3 L6.9 2.9" fill="none" stroke="#fff" stroke-width="1"/></svg>
<div class="cell rn" style="left:1px;top:0.0px;width:21px;text-align:center">1</div>
<div class="cell" style="left:45.6px;top:0.0px">89</div>
<div class="cell" style="left:95px;top:0.0px;width:66.5px;text-align:right">5</div>
<div class="cell" style="left:165px;top:0.0px;width:48.6px;text-align:right">19</div>
<div class="cell" style="left:220.5px;top:0.0px;transform:scaleX(.965);transform-origin:0 0">02/15/2006 05:05:03:000</div>
<div class="a" style="left:1px;top:14.5px;width:20.5px;height:14.5px;background:#ececec;border-bottom:1px solid #cacaca"></div>
<div class="a" style="left:21.5px;top:14.5px;width:20.5px;height:14.5px;background:#f8f7e2"></div>
<div class="a" style="left:42px;top:14.5px;width:53px;height:14.5px;background:#efeee3"></div>
<div class="a" style="left:95px;top:14.5px;width:70px;height:14.5px;background:#f9f5c6"></div>
<div class="a" style="left:165px;top:14.5px;width:179px;height:14.5px;background:#f9f7dc"></div>
<div class="a" style="left:21.5px;top:28.4px;width:322.5px;height:0.6px;background:#ebe9d3"></div>
<svg style="left:27px;top:17.5px" width="9" height="9" viewBox="0 0 9 9"><rect x="0" y="0" width="9" height="9" rx="0.6" fill="#7cc452"/><path d="M2.2 4.7 L3.9 6.3 L6.9 2.9" fill="none" stroke="#fff" stroke-width="1"/></svg>
<div class="cell rn" style="left:1px;top:14.5px;width:21px;text-align:center">2</div>
<div class="cell" style="left:45.6px;top:14.5px">90</div>
<div class="cell" style="left:95px;top:14.5px;width:66.5px;text-align:right">5</div>
<div class="cell" style="left:165px;top:14.5px;width:48.6px;text-align:right">54</div>
<div class="cell" style="left:220.5px;top:14.5px;transform:scaleX(.965);transform-origin:0 0">02/15/2006 05:05:03:000</div>
<div class="a" style="left:1px;top:29.0px;width:20.5px;height:14.5px;background:#ececec;border-bottom:1px solid #cacaca"></div>
<div class="a" style="left:21.5px;top:29.0px;width:20.5px;height:14.5px;background:#fdfce8"></div>
<div class="a" style="left:42px;top:29.0px;width:53px;height:14.5px;background:#f3f2e8"></div>
<div class="a" style="left:95px;top:29.0px;width:70px;height:14.5px;background:#fdf9c9"></div>
<div class="a" style="left:165px;top:29.0px;width:179px;height:14.5px;background:#fdfbe0"></div>
<div class="a" style="left:21.5px;top:42.9px;width:322.5px;height:0.6px;background:#ebe9d3"></div>
<svg style="left:27px;top:32.0px" width="9" height="9" viewBox="0 0 9 9"><rect x="0" y="0" width="9" height="9" rx="0.6" fill="#7cc452"/><path d="M2.2 4.7 L3.9 6.3 L6.9 2.9" fill="none" stroke="#fff" stroke-width="1"/></svg>
<div class="cell rn" style="left:1px;top:29.0px;width:21px;text-align:center">3</div>
<div class="cell" style="left:45.6px;top:29.0px">91</div>
<div class="cell" style="left:95px;top:29.0px;width:66.5px;text-align:right">5</div>
<div class="cell" style="left:165px;top:29.0px;width:48.6px;text-align:right">85</div>
<div class="cell" style="left:220.5px;top:29.0px;transform:scaleX(.965);transform-origin:0 0">02/15/2006 05:05:03:000</div>
<div class="a" style="left:1px;top:43.5px;width:20.5px;height:14.5px;background:#ececec;border-bottom:1px solid #cacaca"></div>
<div class="a" style="left:21.5px;top:43.5px;width:20.5px;height:14.5px;background:#f8f7e2"></div>
<div class="a" style="left:42px;top:43.5px;width:53px;height:14.5px;background:#efeee3"></div>
<div class="a" style="left:95px;top:43.5px;width:70px;height:14.5px;background:#f9f5c6"></div>
<div class="a" style="left:165px;top:43.5px;width:179px;height:14.5px;background:#f9f7dc"></div>
<div class="a" style="left:21.5px;top:57.4px;width:322.5px;height:0.6px;background:#ebe9d3"></div>
<svg style="left:27px;top:46.5px" width="9" height="9" viewBox="0 0 9 9"><rect x="0" y="0" width="9" height="9" rx="0.6" fill="#7cc452"/><path d="M2.2 4.7 L3.9 6.3 L6.9 2.9" fill="none" stroke="#fff" stroke-width="1"/></svg>
<div class="cell rn" style="left:1px;top:43.5px;width:21px;text-align:center">4</div>
<div class="cell" style="left:45.6px;top:43.5px">92</div>
<div class="cell" style="left:95px;top:43.5px;width:66.5px;text-align:right">5</div>
<div class="cell" style="left:165px;top:43.5px;width:48.6px;text-align:right">146</div>
<div class="cell" style="left:220.5px;top:43.5px;transform:scaleX(.965);transform-origin:0 0">02/15/2006 05:05:03:000</div>
<div class="a" style="left:1px;top:58.0px;width:20.5px;height:14.5px;background:#ececec;border-bottom:1px solid #cacaca"></div>
<div class="a" style="left:21.5px;top:58.0px;width:20.5px;height:14.5px;background:#fdfce8"></div>
<div class="a" style="left:42px;top:58.0px;width:53px;height:14.5px;background:#f3f2e8"></div>
<div class="a" style="left:95px;top:58.0px;width:70px;height:14.5px;background:#fdf9c9"></div>
<div class="a" style="left:165px;top:58.0px;width:179px;height:14.5px;background:#fdfbe0"></div>
<div class="a" style="left:21.5px;top:71.9px;width:322.5px;height:0.6px;background:#ebe9d3"></div>
<svg style="left:27px;top:61.0px" width="9" height="9" viewBox="0 0 9 9"><rect x="0" y="0" width="9" height="9" rx="0.6" fill="#7cc452"/><path d="M2.2 4.7 L3.9 6.3 L6.9 2.9" fill="none" stroke="#fff" stroke-width="1"/></svg>
<div class="cell rn" style="left:1px;top:58.0px;width:21px;text-align:center">5</div>
<div class="cell" style="left:45.6px;top:58.0px">93</div>
<div class="cell" style="left:95px;top:58.0px;width:66.5px;text-align:right">5</div>
<div class="cell" style="left:165px;top:58.0px;width:48.6px;text-align:right">171</div>
<div class="cell" style="left:220.5px;top:58.0px;transform:scaleX(.965);transform-origin:0 0">02/15/2006 05:05:03:000</div>
<div class="a" style="left:1px;top:72.5px;width:20.5px;height:14.5px;background:#ececec;border-bottom:1px solid #cacaca"></div>
<div class="a" style="left:21.5px;top:72.5px;width:20.5px;height:14.5px;background:#f8f7e2"></div>
<div class="a" style="left:42px;top:72.5px;width:53px;height:14.5px;background:#efeee3"></div>
<div class="a" style="left:95px;top:72.5px;width:70px;height:14.5px;background:#f9f5c6"></div>
<div class="a" style="left:165px;top:72.5px;width:179px;height:14.5px;background:#f9f7dc"></div>
<div class="a" style="left:21.5px;top:86.4px;width:322.5px;height:0.6px;background:#ebe9d3"></div>
<svg style="left:27px;top:75.5px" width="9" height="9" viewBox="0 0 9 9"><rect x="0" y="0" width="9" height="9" rx="0.6" fill="#7cc452"/><path d="M2.2 4.7 L3.9 6.3 L6.9 2.9" fill="none" stroke="#fff" stroke-width="1"/></svg>
<div class="cell rn" style="left:1px;top:72.5px;width:21px;text-align:center">6</div>
<div class="cell" style="left:45.6px;top:72.5px">94</div>
<div class="cell" style="left:95px;top:72.5px;width:66.5px;text-align:right">5</div>
<div class="cell" style="left:165px;top:72.5px;width:48.6px;text-align:right">172</div>
<div class="cell" style="left:220.5px;top:72.5px;transform:scaleX(.965);transform-origin:0 0">02/15/2006 05:05:03:000</div>
<div class="a" style="left:1px;top:87.0px;width:20.5px;height:14.5px;background:#ececec;border-bottom:1px solid #cacaca"></div>
<div class="a" style="left:21.5px;top:87.0px;width:20.5px;height:14.5px;background:#fdfce8"></div>
<div class="a" style="left:42px;top:87.0px;width:53px;height:14.5px;background:#f3f2e8"></div>
<div class="a" style="left:95px;top:87.0px;width:70px;height:14.5px;background:#fdf9c9"></div>
<div class="a" style="left:165px;top:87.0px;width:179px;height:14.5px;background:#fdfbe0"></div>
<div class="a" style="left:21.5px;top:100.9px;width:322.5px;height:0.6px;background:#ebe9d3"></div>
<svg style="left:27px;top:90.0px" width="9" height="9" viewBox="0 0 9 9"><rect x="0" y="0" width="9" height="9" rx="0.6" fill="#7cc452"/><path d="M2.2 4.7 L3.9 6.3 L6.9 2.9" fill="none" stroke="#fff" stroke-width="1"/></svg>
<div class="cell rn" style="left:1px;top:87.0px;width:21px;text-align:center">7</div>
<div class="cell" style="left:45.6px;top:87.0px">95</div>
<div class="cell" style="left:95px;top:87.0px;width:66.5px;text-align:right">5</div>
<div class="cell" style="left:165px;top:87.0px;width:48.6px;text-align:right">202</div>
<div class="cell" style="left:220.5px;top:87.0px;transform:scaleX(.965);transform-origin:0 0">02/15/2006 05:05:03:000</div>
<div class="a" style="left:1px;top:101.5px;width:20.5px;height:14.5px;background:#ececec;border-bottom:1px solid #cacaca"></div>
<div class="a" style="left:21.5px;top:101.5px;width:20.5px;height:14.5px;background:#f8f7e2"></div>
<div class="a" style="left:42px;top:101.5px;width:53px;height:14.5px;background:#efeee3"></div>
<div class="a" style="left:95px;top:101.5px;width:70px;height:14.5px;background:#f9f5c6"></div>
<div class="a" style="left:165px;top:101.5px;width:179px;height:14.5px;background:#f9f7dc"></div>
<div class="a" style="left:21.5px;top:115.4px;width:322.5px;height:0.6px;background:#ebe9d3"></div>
<svg style="left:27px;top:104.5px" width="9" height="9" viewBox="0 0 9 9"><rect x="0" y="0" width="9" height="9" rx="0.6" fill="#7cc452"/><path d="M2.2 4.7 L3.9 6.3 L6.9 2.9" fill="none" stroke="#fff" stroke-width="1"/></svg>
<div class="cell rn" style="left:1px;top:101.5px;width:21px;text-align:center">8</div>
<div class="cell" style="left:45.6px;top:101.5px">96</div>
<div class="cell" style="left:95px;top:101.5px;width:66.5px;text-align:right">5</div>
<div class="cell" style="left:165px;top:101.5px;width:48.6px;text-align:right">203</div>
<div class="cell" style="left:220.5px;top:101.5px;transform:scaleX(.965);transform-origin:0 0">02/15/2006 05:05:03:000</div>
<div class="a" style="left:1px;top:116.0px;width:20.5px;height:14.5px;background:#ececec;border-bottom:1px solid #cacaca"></div>
<div class="a" style="left:21.5px;top:116.0px;width:20.5px;height:14.5px;background:#fdfce8"></div>
<div class="a" style="left:42px;top:116.0px;width:53px;height:14.5px;background:#f3f2e8"></div>
<div class="a" style="left:95px;top:116.0px;width:70px;height:14.5px;background:#fdf9c9"></div>
<div class="a" style="left:165px;top:116.0px;width:179px;height:14.5px;background:#fdfbe0"></div>
<div class="a" style="left:21.5px;top:129.9px;width:322.5px;height:0.6px;background:#ebe9d3"></div>
<svg style="left:27px;top:119.0px" width="9" height="9" viewBox="0 0 9 9"><rect x="0" y="0" width="9" height="9" rx="0.6" fill="#7cc452"/><path d="M2.2 4.7 L3.9 6.3 L6.9 2.9" fill="none" stroke="#fff" stroke-width="1"/></svg>
<div class="cell rn" style="left:1px;top:116.0px;width:21px;text-align:center">9</div>
<div class="cell" style="left:45.6px;top:116.0px">97</div>
<div class="cell" style="left:95px;top:116.0px;width:66.5px;text-align:right">5</div>
<div class="cell" style="left:165px;top:116.0px;width:48.6px;text-align:right">286</div>
<div class="cell" style="left:220.5px;top:116.0px;transform:scaleX(.965);transform-origin:0 0">02/15/2006 05:05:03:000</div>
<div class="a" style="left:1px;top:130.5px;width:20.5px;height:14.5px;background:#ececec;border-bottom:1px solid #cacaca"></div>
<div class="a" style="left:21.5px;top:130.5px;width:20.5px;height:14.5px;background:#f8f7e2"></div>
<div class="a" style="left:42px;top:130.5px;width:53px;height:14.5px;background:#efeee3"></div>
<div class="a" style="left:95px;top:130.5px;width:70px;height:14.5px;background:#f9f5c6"></div>
<div class="a" style="left:165px;top:130.5px;width:179px;height:14.5px;background:#f9f7dc"></div>
<div class="a" style="left:21.5px;top:144.4px;width:322.5px;height:0.6px;background:#ebe9d3"></div>
<svg style="left:27px;top:133.5px" width="9" height="9" viewBox="0 0 9 9"><rect x="0" y="0" width="9" height="9" rx="0.6" fill="#7cc452"/><path d="M2.2 4.7 L3.9 6.3 L6.9 2.9" fill="none" stroke="#fff" stroke-width="1"/></svg>
<div class="cell rn" style="left:1px;top:130.5px;width:21px;text-align:center">10</div>
<div class="cell" style="left:45.6px;top:130.5px">98</div>
<div class="cell" style="left:95px;top:130.5px;width:66.5px;text-align:right">5</div>
<div class="cell" style="left:165px;top:130.5px;width:48.6px;text-align:right">288</div>
<div class="cell" style="left:220.5px;top:130.5px;transform:scaleX(.965);transform-origin:0 0">02/15/2006 05:05:03:000</div>
<div class="a" style="left:1px;top:145.0px;width:20.5px;height:14.5px;background:#ececec;border-bottom:1px solid #cacaca"></div>
<div class="a" style="left:21.5px;top:145.0px;width:20.5px;height:14.5px;background:#fdfce8"></div>
<div class="a" style="left:42px;top:145.0px;width:53px;height:14.5px;background:#f3f2e8"></div>
<div class="a" style="left:95px;top:145.0px;width:70px;height:14.5px;background:#fdf9c9"></div>
<div class="a" style="left:165px;top:145.0px;width:179px;height:14.5px;background:#fdfbe0"></div>
<div class="a" style="left:21.5px;top:158.9px;width:322.5px;height:0.6px;background:#ebe9d3"></div>
<svg style="left:27px;top:148.0px" width="9" height="9" viewBox="0 0 9 9"><rect x="0" y="0" width="9" height="9" rx="0.6" fill="#7cc452"/><path d="M2.2 4.7 L3.9 6.3 L6.9 2.9" fill="none" stroke="#fff" stroke-width="1"/></svg>
<div class="cell rn" style="left:1px;top:145.0px;width:21px;text-align:center">11</div>
<div class="cell" style="left:45.6px;top:145.0px">99</div>
<div class="cell" style="left:95px;top:145.0px;width:66.5px;text-align:right">5</div>
<div class="cell" style="left:165px;top:145.0px;width:48.6px;text-align:right">316</div>
<div class="cell" style="left:220.5px;top:145.0px;transform:scaleX(.965);transform-origin:0 0">02/15/2006 05:05:03:000</div>
<div class="a" style="left:1px;top:159.5px;width:20.5px;height:14.5px;background:#ececec;border-bottom:1px solid #cacaca"></div>
<div class="a" style="left:21.5px;top:159.5px;width:20.5px;height:14.5px;background:#f8f7e2"></div>
<div class="a" style="left:42px;top:159.5px;width:53px;height:14.5px;background:#efeee3"></div>
<div class="a" style="left:95px;top:159.5px;width:70px;height:14.5px;background:#f9f5c6"></div>
<div class="a" style="left:165px;top:159.5px;width:179px;height:14.5px;background:#f9f7dc"></div>
<div class="a" style="left:21.5px;top:173.4px;width:322.5px;height:0.6px;background:#ebe9d3"></div>
<svg style="left:27px;top:162.5px" width="9" height="9" viewBox="0 0 9 9"><rect x="0" y="0" width="9" height="9" rx="0.6" fill="#7cc452"/><path d="M2.2 4.7 L3.9 6.3 L6.9 2.9" fill="none" stroke="#fff" stroke-width="1"/></svg>
<div class="cell rn" style="left:1px;top:159.5px;width:21px;text-align:center">12</div>
<div class="cell" style="left:45.6px;top:159.5px">100</div>
<div class="cell" style="left:95px;top:159.5px;width:66.5px;text-align:right">5</div>
<div class="cell" style="left:165px;top:159.5px;width:48.6px;text-align:right">340</div>
<div class="cell" style="left:220.5px;top:159.5px;transform:scaleX(.965);transform-origin:0 0">02/15/2006 05:05:03:000</div>
<div class="a" style="left:1px;top:174.0px;width:20.5px;height:14.5px;background:#ececec;border-bottom:1px solid #cacaca"></div>
<div class="a" style="left:21.5px;top:174.0px;width:20.5px;height:14.5px;background:#fdfce8"></div>
<div class="a" style="left:42px;top:174.0px;width:53px;height:14.5px;background:#f3f2e8"></div>
<div class="a" style="left:95px;top:174.0px;width:70px;height:14.5px;background:#fdf9c9"></div>
<div class="a" style="left:165px;top:174.0px;width:179px;height:14.5px;background:#fdfbe0"></div>
<div class="a" style="left:21.5px;top:187.9px;width:322.5px;height:0.6px;background:#ebe9d3"></div>
<svg style="left:27px;top:177.0px" width="9" height="9" viewBox="0 0 9 9"><rect x="0" y="0" width="9" height="9" rx="0.6" fill="#7cc452"/><path d="M2.2 4.7 L3.9 6.3 L6.9 2.9" fill="none" stroke="#fff" stroke-width="1"/></svg>
<div class="cell rn" style="left:1px;top:174.0px;width:21px;text-align:center">13</div>
<div class="cell" style="left:45.6px;top:174.0px">101</div>
<div class="cell" style="left:95px;top:174.0px;width:66.5px;text-align:right">5</div>
<div class="cell" style="left:165px;top:174.0px;width:48.6px;text-align:right">369</div>
<div class="cell" style="left:220.5px;top:174.0px;transform:scaleX(.965);transform-origin:0 0">02/15/2006 05:05:03:000</div>
<div class="a" style="left:1px;top:188.5px;width:20.5px;height:14.5px;background:#ececec;border-bottom:1px solid #cacaca"></div>
<div class="a" style="left:21.5px;top:188.5px;width:20.5px;height:14.5px;background:#f8f7e2"></div>
<div class="a" style="left:42px;top:188.5px;width:53px;height:14.5px;background:#efeee3"></div>
<div class="a" style="left:95px;top:188.5px;width:70px;height:14.5px;background:#f9f5c6"></div>
<div class="a" style="left:165px;top:188.5px;width:179px;height:14.5px;background:#f9f7dc"></div>
<div class="a" style="left:21.5px;top:202.4px;width:322.5px;height:0.6px;background:#ebe9d3"></div>
<svg style="left:27px;top:191.5px" width="9" height="9" viewBox="0 0 9 9"><rect x="0" y="0" width="9" height="9" rx="0.6" fill="#7cc452"/><path d="M2.2 4.7 L3.9 6.3 L6.9 2.9" fill="none" stroke="#fff" stroke-width="1"/></svg>
<div class="cell rn" style="left:1px;top:188.5px;width:21px;text-align:center">14</div>
<div class="cell" style="left:45.6px;top:188.5px">102</div>
<div class="cell" style="left:95px;top:188.5px;width:66.5px;text-align:right">5</div>
<div class="cell" style="left:165px;top:188.5px;width:48.6px;text-align:right">375</div>
<div class="cell" style="left:220.5px;top:188.5px;transform:scaleX(.965);transform-origin:0 0">02/15/2006 05:05:03:000</div>
<div class="a" style="left:164px;top:0;width:1px;height:200px;background:rgba(0,0,0,.06)"></div>
<div class="a" style="left:217px;top:0;width:1px;height:200px;background:rgba(0,0,0,.06)"></div>
<div class="a" style="left:343.5px;top:0;width:1px;height:200px;background:rgba(0,0,0,.06)"></div>
</div>
<div class="a" style="left:0;top:560px;width:950px;height:17.5px;background:#ebebeb"></div>
<svg style="left:24px;top:565px" width="9" height="10" viewBox="0 0 9 10"><rect x="0.5" y="1" width="1.4" height="8" fill="#2a2a2a"/><path d="M8 1 V9 L2.4 5 Z" fill="#2a2a2a"/></svg>
<svg style="left:40px;top:565px" width="7" height="10" viewBox="0 0 7 10"><path d="M6 1 V9 L0.6 5 Z" fill="#2a2a2a"/></svg>
<div class="a" style="left:53px;top:562.5px;width:82px;height:13px;background:#fff"></div>
<div class="t" style="left:55.5px;top:564px;font-size:9px;color:#1e1e1e">1</div>
<svg style="left:142px;top:565px" width="7" height="10" viewBox="0 0 7 10"><path d="M0.6 1 V9 L6 5 Z" fill="#2a2a2a"/></svg>
<svg style="left:156.5px;top:565px" width="9" height="10" viewBox="0 0 9 10"><path d="M0.6 1 V9 L6.2 5 Z" fill="#2a2a2a"/><rect x="7" y="1" width="1.4" height="8" fill="#2a2a2a"/></svg>
<div class="t" style="left:181px;top:564px;font-size:9px;color:#333">from 29</div>
<svg style="left:229px;top:565px" width="9" height="10" viewBox="0 0 9 10"><path d="M4.5 1 V9 M0.5 5 H8.5" stroke="#222" stroke-width="1.8"/></svg>
<svg style="left:244px;top:565px" width="10" height="10" viewBox="0 0 10 10"><path d="M3.2 0.8 V5.6 M0.8 3.2 H5.6" stroke="#aaaaaa" stroke-width="1.2"/><path d="M7.4 5 V9.6 M5.1 7.3 H9.7" stroke="#aaaaaa" stroke-width="1.2"/></svg>
<svg style="left:260px;top:565px" width="9" height="10" viewBox="0 0 9 10"><path d="M0.5 5 H8.5" stroke="#2a2a2a" stroke-width="1.6"/></svg>
<svg style="left:281px;top:565px" width="10" height="10" viewBox="0 0 10 10"><path d="M0.8 5.2 L3.6 8.2 L9.2 1.6" fill="none" stroke="#9fd49a" stroke-width="1.2"/></svg>
<svg style="left:298px;top:565px" width="9" height="10" viewBox="0 0 9 10"><path d="M0.8 1 L8.2 9 M8.2 1 L0.8 9" stroke="#f0a0a0" stroke-width="1.1"/></svg>
<svg style="left:319px;top:565px" width="10" height="10" viewBox="0 0 10 10"><path d="M1 9 L1.6 6.6 L7.2 1 L9 2.8 L3.4 8.4 Z" fill="#aaaaaa"/></svg>
<svg style="left:334px;top:565px" width="11" height="10" viewBox="0 0 11 10"><rect x="0.5" y="1.5" width="10" height="7" fill="#d4d4d4" stroke="#888" stroke-width="0.8"/></svg>
<svg style="left:915px;top:564.6px" width="11" height="11" viewBox="0 0 11 11"><path d="M4.4 0.8 V8.6" stroke="#444" stroke-width="0.9"/><path d="M1.4 4.8 H3.1 M5.7 4.8 H7.6" stroke="#4a9be8" stroke-width="1.3" stroke-linecap="round"/><path d="M6 7.4 H9.6 L7.8 9.8 Z" fill="#1a1a1a"/></svg>
<svg style="left:932px;top:564.6px" width="11" height="11" viewBox="0 0 11 11"><path d="M3.9 0.7 H6 V3.4 H8.1 L4.95 6.9 L1.8 3.4 H3.9 Z" fill="none" stroke="#333" stroke-width="0.85" stroke-linejoin="miter"/><path d="M0.6 8.4 H8" stroke="#333" stroke-width="0.9"/><path d="M6.6 7.6 H10.2 L8.4 10 Z" fill="#1a1a1a"/></svg>
<div class="a" style="left:0;top:576.8px;width:950px;height:2px;background:#cbcbcb"></div>
<div class="a" style="left:0;top:578.6px;width:950px;height:15.4px;background:linear-gradient(#e4e4e4,#d6d6d6 35%,#b8b8b8)"></div>
<div class="t" style="left:4.3px;top:580px;font-size:9.2px;color:#2a2a2a">localhost</div>
</div></body></html>
